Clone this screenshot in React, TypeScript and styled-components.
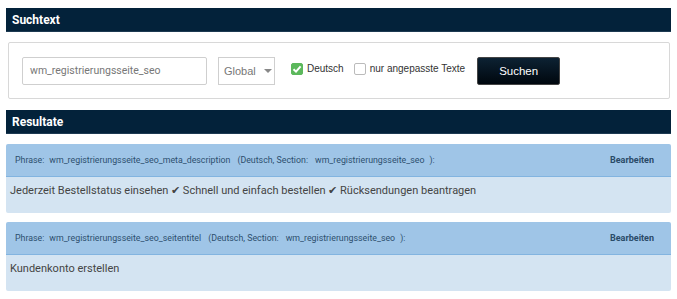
import React from 'react';
import styled, { createGlobalStyle } from 'styled-components';

const GlobalStyle = createGlobalStyle`
  body {
    margin: 0;
    background: #fff;
    font-family: Roboto, "Liberation Sans", sans-serif;
  }
`;

const Page = styled.div`
  padding: 8px 6px 0 6px;
  display: flex;
  flex-direction: column;
`;

const SectionBar = styled.div<{ $gap?: number }>`
  height: 23px;
  background: #03223a;
  border-bottom: 1px solid #1d3a52;
  color: #fff;
  font-weight: 700;
  font-size: 12px;
  display: flex;
  align-items: center;
  padding-left: 6px;
  margin-bottom: ${({ $gap }) => $gap ?? 0}px;
`;

const SearchPanel = styled.div`
  margin: 0 1px 11px 2px;
  height: 57px;
  border: 1px solid #d8d8d8;
  border-radius: 2px;
  display: flex;
  align-items: center;
  padding: 0 0 0 13px;
  box-sizing: border-box;
`;

const TextInput = styled.div`
  width: 185px;
  height: 28px;
  box-sizing: border-box;
  border: 1px solid #cfcfcf;
  border-radius: 2px;
  display: flex;
  align-items: center;
  padding-left: 7px;
  color: #777;
  font-size: 10.5px;
`;

const Select = styled.div`
  margin-left: 11px;
  width: 57px;
  height: 28px;
  box-sizing: border-box;
  border: 1px solid #cfcfcf;
  display: flex;
  align-items: center;
  padding-left: 5px;
  gap: 8px;
  color: #777;
  font-family: "Liberation Sans", Arial, sans-serif;
  font-size: 11px;
`;

const Caret = styled.span`
  width: 0;
  height: 0;
  border-left: 4px solid transparent;
  border-right: 4px solid transparent;
  border-top: 4px solid #888;
`;

const CheckLabel = styled.label<{ $ml: number }>`
  margin-left: ${({ $ml }) => $ml}px;
  display: flex;
  align-items: center;
  gap: 4px;
  font-family: "Liberation Sans", Arial, sans-serif;
  font-size: 10px;
  color: #333;
  margin-top: -4px;
`;

const Box = styled.span<{ $checked?: boolean }>`
  width: 12px;
  height: 12px;
  border-radius: 2px;
  box-sizing: border-box;
  border: 1px solid ${({ $checked }) => ($checked ? '#5cb85c' : '#bbb')};
  background: ${({ $checked }) => ($checked ? '#5cb85c' : '#fff')};
  display: flex;
  align-items: center;
  justify-content: center;
`;

const Button = styled.div`
  margin-left: 12px;
  width: 83px;
  height: 28px;
  box-sizing: border-box;
  background: linear-gradient(#0d2233, #00070e);
  border: 1px solid #444;
  border-radius: 2px;
  color: #fff;
  font-family: "Liberation Sans", Arial, sans-serif;
  font-size: 11.5px;
  display: flex;
  align-items: center;
  justify-content: center;
`;

const Card = styled.div`
  margin-bottom: 9px;
  border-radius: 2px;
  overflow: hidden;
`;

const CardHead = styled.div`
  height: 32px;
  background: #9fc5e7;
  border-bottom: 1px solid #82b4e0;
  display: flex;
  align-items: center;
  padding: 0 17px 0 9px;
  font-size: 8.8px;
  color: #2d4f6e;
`;

const Meta = styled.div`
  flex: 1;
  display: flex;
  gap: 5px;
  white-space: nowrap;
`;

const MetaPart = styled.span<{ $pad?: number }>`
  margin: 0 ${({ $pad }) => $pad ?? 0}px;
`;

const Edit = styled.span`
  font-weight: 700;
  font-size: 9px;
  color: #2a4b68;
`;

const CardBody = styled.div`
  height: 36px;
  background: #d4e4f2;
  padding: 7px 4px 0 4px;
  box-sizing: border-box;
  font-size: 11px;
  color: #444;
`;

const results = [
  {
    key: 'wm_registrierungsseite_seo_meta_description',
    text: 'Jederzeit Bestellstatus einsehen ✔ Schnell und einfach bestellen ✔ Rücksendungen beantragen',
  },
  { key: 'wm_registrierungsseite_seo_seitentitel', text: 'Kundenkonto erstellen' },
];

export default function App() {
  return (
    <>
      <GlobalStyle />
      <Page>
        <SectionBar $gap={10}>Suchtext</SectionBar>
        <SearchPanel>
          <TextInput>wm_registrierungsseite_seo</TextInput>
          <Select>
            Global
            <Caret />
          </Select>
          <CheckLabel $ml={16}>
            <Box $checked>
              <svg width="10" height="10" viewBox="0 0 10 10">
                <path d="M1.5 5.2 L4 7.6 L8.6 2.4" stroke="#fff" strokeWidth="2" fill="none" />
              </svg>
            </Box>
            Deutsch
          </CheckLabel>
          <CheckLabel $ml={10}>
            <Box />
            nur angepasste Texte
          </CheckLabel>
          <Button>Suchen</Button>
        </SearchPanel>
        <SectionBar $gap={10}>Resultate</SectionBar>
        {results.map((r) => (
          <Card key={r.key}>
            <CardHead>
              <Meta>
                <MetaPart>Phrase:</MetaPart>
                <MetaPart>{r.key}</MetaPart>
                <MetaPart $pad={2}>(Deutsch, Section:</MetaPart>
                <MetaPart>wm_registrierungsseite_seo</MetaPart>
                <MetaPart>):</MetaPart>
              </Meta>
              <Edit>Bearbeiten</Edit>
            </CardHead>
            <CardBody>{r.text}</CardBody>
          </Card>
        ))}
      </Page>
    </>
  );
}
